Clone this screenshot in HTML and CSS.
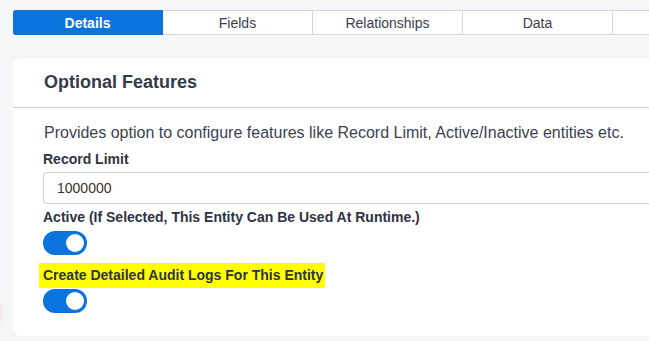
FILE: index.html
```html
<!DOCTYPE html>
<html>
<head>
<meta charset="utf-8">
<link rel="stylesheet" href="styles.css">
</head>
<body>
<div class="page">
  <nav class="tabs">
    <div class="tab active">Details</div>
    <div class="tab">Fields</div>
    <div class="tab">Relationships</div>
    <div class="tab">Data</div>
    <div class="tab"></div>
  </nav>
  <section class="card">
    <header class="card-header">Optional Features</header>
    <div class="card-body">
      <p class="desc">Provides option to configure features like Record Limit, Active/Inactive entities etc.</p>
      <label class="label">Record Limit</label>
      <input class="input" type="text" value="1000000">
      <label class="label">Active (If Selected, This Entity Can Be Used At Runtime.)</label>
      <div class="toggle"><span class="knob"></span></div>
      <label class="label"><span class="hl">Create Detailed Audit Logs For This Entity</span></label>
      <div class="toggle last"><span class="knob"></span></div>
    </div>
  </section>
  <div class="edge-blob"></div>
</div>
</body>
</html>
```

FILE: styles.css
```css
html, body {
  margin: 0;
  padding: 0;
  background: #f5f6f8;
  overflow: hidden;
  font-family: "Liberation Sans", Arial, sans-serif;
}
.page {
  position: relative;
  padding: 10px 0 0 13px;
  width: 900px;
  height: 341px;
  box-sizing: border-box;
}
.tabs {
  display: flex;
  height: 25px;
}
.tab {
  width: 150px;
  box-sizing: border-box;
  background: #fff;
  border: 1px solid #d3d6de;
  border-left: none;
  display: flex;
  align-items: center;
  justify-content: center;
  font-size: 14px;
  color: #3a3d4a;
}
.tab.active {
  background: #0b74dc;
  border-color: #0b74dc;
  color: #fff;
  font-weight: bold;
  border-radius: 3px 0 0 3px;
}
.card {
  margin-top: 23px;
  width: 760px;
  background: #fff;
  border-radius: 7px;
  box-shadow: 0 0 1px rgba(0,0,0,0.04);
}
.card-header {
  height: 50px;
  box-sizing: border-box;
  border-bottom: 1px solid #cdd0da;
  padding-left: 31px;
  display: flex;
  align-items: center;
  font-size: 18px;
  font-weight: bold;
  color: #343a4c;
}
.card-body {
  padding: 16px 31px 23px 30px;
  display: flex;
  flex-direction: column;
  align-items: flex-start;
}
.desc {
  margin: 0 0 9px 1px;
  font-size: 16px;
  line-height: 18px;
  color: #3c4252;
}
.label {
  display: block;
  font-size: 14px;
  line-height: 16px;
  font-weight: bold;
  color: #2e3242;
  margin: 0 0 5px 0;
}
.input {
  width: 700px;
  height: 32px;
  box-sizing: border-box;
  border: 1px solid #c9cdd6;
  border-radius: 4px;
  padding: 0 13px;
  font-family: "Liberation Sans", Arial, sans-serif;
  font-size: 14px;
  color: #333;
  margin: 0 0 5px 0;
  outline: none;
}
.toggle {
  width: 44px;
  height: 24px;
  border-radius: 12px;
  background: #0b74dc;
  margin: 1px 0 12px 0;
  display: flex;
  align-items: center;
  justify-content: flex-end;
  padding-right: 3px;
  box-sizing: border-box;
}
.toggle.last {
  margin-bottom: 0;
}
.knob {
  width: 18px;
  height: 18px;
  border-radius: 50%;
  background: #fff;
}
.hl {
  background: #ffff00;
  padding: 4px 2px 5px 4px;
  margin-left: -4px;
}
.edge-blob {
  position: absolute;
  left: -6px;
  top: 302px;
  width: 9px;
  height: 22px;
  border-radius: 50%;
  background: #f5e9e9;
}
```
